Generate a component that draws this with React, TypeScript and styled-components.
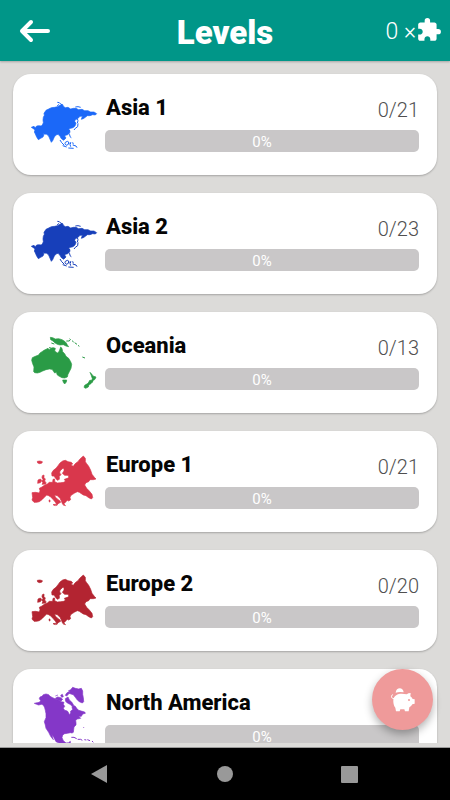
import React from "react";
import styled, { createGlobalStyle } from "styled-components";
import { MdExtension } from "react-icons/md";

const GlobalStyle = createGlobalStyle`
  *, *::before, *::after { box-sizing: border-box; }
  body { margin: 0; background: #dcdbd9; font-family: Roboto, sans-serif; }
  button { border: 0; padding: 0; background: none; font: inherit; color: inherit; cursor: pointer; }
`;

const Screen = styled.div`
  display: flex;
  flex-direction: column;
  height: 100vh;
  background: #dcdbd9;
`;

const Header = styled.header`
  flex: none;
  display: grid;
  grid-template-columns: 1fr auto 1fr;
  align-items: center;
  height: 61px;
  padding: 0 8px;
  background: #009688;
  color: #fff;
  box-shadow: 0 1px 2px rgba(0, 0, 0, 0.25);
`;

const BackButton = styled.button`
  display: flex;
  width: 34px;
  height: 34px;
  margin-left: 10px;
`;

const Title = styled.h1`
  margin: 0;
  padding-top: 4px;
  font-size: 33px;
  line-height: 40px;
  font-weight: 900;
`;

const Pieces = styled.div`
  display: flex;
  justify-content: flex-end;
  align-items: center;
  padding-top: 2px;
  font-size: 23px;
  line-height: 28px;
  font-weight: 350;

  svg { margin-bottom: 3px; }
`;

const Levels = styled.main`
  flex: 1;
  min-height: 0;
  overflow: hidden;
  display: flex;
  flex-direction: column;
  gap: 18px;
  padding: 13px 13px 0;
  margin-bottom: 4px;
`;

const Card = styled.section`
  flex: none;
  display: flex;
  gap: 7px;
  height: 101px;
  padding: 16px 18px 0 15px;
  border-radius: 18px;
  background: #fff;
  box-shadow: 0 1px 2px rgba(0, 0, 0, 0.25);
`;

const MapPicture = styled.svg<{ $color: string }>`
  flex: none;
  width: 70px;
  height: 70px;
  fill: ${(p) => p.$color};
  stroke: ${(p) => p.$color};
  stroke-width: 2;
  stroke-linejoin: round;
`;

const Details = styled.div`
  flex: 1;
  min-width: 0;
`;

const Caption = styled.div`
  display: flex;
  justify-content: space-between;
  height: 40px;
`;

const Name = styled.h2`
  margin: 0;
  padding: 4px 0 0 1px;
  font-size: 22px;
  line-height: 28px;
  font-weight: 800;
  color: #050505;
`;

const Count = styled.span`
  padding-top: 6px;
  font-size: 20px;
  line-height: 28px;
  font-weight: 300;
  color: #505050;
`;

const Bar = styled.div`
  height: 22px;
  border-radius: 5px;
  background: #c9c7c8;
  color: #fff;
  font-size: 15px;
  line-height: 24px;
  text-align: center;
`;

const SavingsButton = styled.button`
  position: fixed;
  right: 17px;
  bottom: 70px;
  display: flex;
  align-items: center;
  justify-content: center;
  width: 61px;
  height: 61px;
  border-radius: 50%;
  && { background: #ef9a9a; color: #fff; }
  box-shadow: 0 4px 8px rgba(0, 0, 0, 0.3);
`;

const SystemBar = styled.nav`
  flex: none;
  display: grid;
  grid-template-columns: repeat(3, 1fr);
  height: 53px;
  padding: 0 38px;
  border-top: 1px solid #999;
  background: #000;
`;

const SystemButton = styled.button`
  display: flex;
  align-items: center;
  justify-content: center;
  svg { fill: #999; }
`;

const asia = (
  <>
    <path d="M34 112L42 109 46 113 50 108 56 107 64 108 68 103 70 98 69 90 70 82 73 76 72 70 78 61 86 57 94 53 104 52 112 50 120 46 126 43 130 49 136 53 144 52 152 57 160 55 168 55 176 59 186 58 194 62 204 62 212 66 222 66 230 71 226 75 218 74 210 77 202 77 196 82 190 86 184 88 186 82 188 79 180 79 176 83 171 87 166 89 164 94 168 100 165 108 159 113 152 115 146 117 150 123 149 129 143 134 137 136 134 138 138 144 131 151 124 146 120 139 114 133 108 135 103 141 98 152 94 157 90 148 86 138 80 133 73 132 69 130 72 134 69 141 62 145 55 149 50 141 46 132 43 126 45 120 40 116z" />
    <path d="M112 37l6 1 4 4 8 4M116 43l-4 5M166 51l8-1 8 2M172 86l2 6-2 7M174 100l-1 10-7 5-4 5M147 120l2 3M146 130l3 4 1 6 4 3M120 150l5 8 8 8M128 167l12 4M136 157l6-3 4 2-1 7-6 3-4-5zM148 160l5-2-3 5 2 7M158 157l2 6M158 165l10 3 3 5M145 174l16 1" fill="none" strokeWidth="3" />
  </>
);

const oceania = (
  <>
    <path d="M35 106L37 98 46 94 56 90 60 84 66 80 72 76 80 72 84 70 88 74 94 69 100 68 106 70 104 78 112 84 117 80 120 72 122 66 126 70 128 80 134 86 138 94 146 100 152 110 155 118 153 130 148 140 144 148 142 156 134 159 126 158 118 154 112 150 109 142 104 144 100 138 96 133 88 132 78 134 68 138 60 142 52 144 44 143 41 140 42 126 38 116z" />
    <path d="M128 165L140 165 139 171 134 177 130 172zM91 37L98 38 106 42 116 41 126 44 134 49 139 54 142 60 146 65 138 63 130 59 120 60 112 58 104 53 99 48 92 44zM210 142L215 147 219 153 228 156 225 163 220 166 216 173 214 168 217 161 214 152zM210 165L217 169 213 176 207 179 205 186 197 190 192 187 194 181 204 175z" />
    <path d="M94 54l9 3M139 48l9 0 2-4M149 41l3 3M156 47l5 4M164 53l7 5M174 61l4 3M187 96l8 3M87 68l6 1" fill="none" strokeWidth="3" />
  </>
);

const europe = (
  <>
    <path d="M36 165L38 158 37 150 36 143 46 142 58 144 60 137 58 130 66 126 74 120 82 117 88 112 98 112 99 103 104 102 104 110 112 114 122 113 132 112 136 108 133 103 142 100 147 97 144 91 134 91 127 85 132 78 132 70 127 71 120 78 119 84 123 89 118 94 118 103 112 106 106 99 102 93 96 93 95 84 100 76 108 70 114 62 120 54 128 48 136 46 144 50 154 52 158 57 152 60 160 64 164 58 168 54 174 50 178 44 184 38 190 33 196 40 196 50 200 56 206 64 212 76 216 88 224 98 228 102 220 104 210 104 206 110 198 113 194 120 200 130 208 138 216 148 218 158 214 162 206 158 198 152 190 150 184 146 178 142 172 140 164 144 158 148 152 152 150 158 152 164 146 168 142 166 138 170 132 176 134 180 128 178 124 168 120 160 112 152 104 150 106 156 112 162 120 168 122 172 114 176 110 182 108 174 100 164 92 156 86 152 80 150 74 156 66 164 58 170 50 172 42 172z" />
    <path d="M52 49l8-1 7 2-1 4-7 2-6-2zM67 92l5-2 0 8 4 4-2 6 4 5-1 4-11 1 3-5-4-4 4-5-3-6zM54 105l7-3 4 4-4 7-8 2zM87 165l3 0 0 6-2 0zM99 179l8-1-1 4zM130 181l8 1" />
  </>
);

const northAmerica = (
  <>
    <path d="M43 85L52 83 58 82 62 77 58 71 60 66 66 64 70 59 78 57 86 59 90 64 98 68 106 72 116 76 124 80 132 82 130 88 134 94 130 100 134 106 142 108 146 114 148 120 152 114 152 108 158 104 156 96 158 90 166 94 170 100 176 106 194 111 196 115 188 117 184 124 176 124 182 130 172 132 167 136 168 144 168 150 162 156 161 164 160 172 156 174 151 173 142 175 134 176 128 180 126 188 130 197 138 204 146 203 151 199 151 206 156 214 150 216 136 210 120 205 108 200 102 188 95 178 100 194 92 184 86 172 78 160 76 150 73 140 78 128 78 116 76 106 74 98 70 90 64 88 56 90 50 88z" />
    <path d="M145 48L152 44 158 37 166 40 176 42 184 40 188 48 188 58 190 68 191 80 187 84 178 80 172 75 166 67 160 59 153 57 144 54 150 51z" />
    <path d="M106 70l7-4 9 2 6 5-5 5-9-2zM122 61l5-3 3 7-5 2zM136 61l5-8 6-1-2 6-5 5zM136 71l8-5 4 9 7 6 5 8-4 4-6-5-8-4-5-5zM190 156l2 3M106 63l8-3" />
    <path d="M154 187l8 0 8 4M173 193l9 0 5 3M193 194l6 1M202 194l8 3M216 198l4 4" fill="none" strokeWidth="3" />
  </>
);

const levels = [
  { name: "Asia 1", total: 21, color: "#1b68f8", viewBox: "24 0 210 210", shape: asia },
  { name: "Asia 2", total: 23, color: "#173fba", viewBox: "24 0 210 210", shape: asia },
  { name: "Oceania", total: 13, color: "#2a9b46", viewBox: "24 9 210 210", shape: oceania },
  { name: "Europe 1", total: 21, color: "#d9374c", viewBox: "24 6 210 210", shape: europe },
  { name: "Europe 2", total: 20, color: "#b32431", viewBox: "24 6 210 210", shape: europe },
  { name: "North America", total: 22, color: "#8437c8", viewBox: "24 30 210 210", shape: northAmerica },
];

export default function App() {
  return (
    <Screen>
      <GlobalStyle />
      <Header>
        <BackButton aria-label="Back">
          <svg width="34" height="34" viewBox="0 0 34 34" fill="none" stroke="#fff" strokeWidth="4" strokeLinecap="round" strokeLinejoin="round">
            <path d="M30 17H4M13 8L4 17l9 9" />
          </svg>
        </BackButton>
        <Title>Levels</Title>
        <Pieces>
          0 ×<MdExtension size={26} />
        </Pieces>
      </Header>
      <Levels>
        {levels.map((level) => (
          <Card key={level.name}>
            <MapPicture $color={level.color} viewBox={level.viewBox} aria-hidden="true">
              {level.shape}
            </MapPicture>
            <Details>
              <Caption>
                <Name>{level.name}</Name>
                <Count>0/{level.total}</Count>
              </Caption>
              <Bar role="progressbar" aria-label={level.name} aria-valuenow={0}>0%</Bar>
            </Details>
          </Card>
        ))}
      </Levels>
      <SavingsButton aria-label="Savings">
        <svg width="26" height="26" viewBox="87 78 78 78" fill="#fff">
          <path d="M104 95C105 79 126 77 128 94Q115 91 104 95z" />
          <path d="M97 116C99 103 110 98 122 98L137 100Q142 96 149 96L148 106Q153 110 155 114L161 115V128L154 130Q151 136 145 139L143 151H132L130 145H118L116 151H105L103 140Q96 132 97 116z" />
          <path d="M98 113C90 113 89 103 95 101" fill="none" stroke="#fff" strokeWidth="3" strokeLinecap="round" />
          <circle cx="144" cy="117" r="3" fill="#ef9a9a" />
        </svg>
      </SavingsButton>
      <SystemBar>
        <SystemButton aria-label="System back">
          <svg width="18" height="18" viewBox="0 0 18 18"><path d="M0 9L16 0v18z" /></svg>
        </SystemButton>
        <SystemButton aria-label="Home">
          <svg width="16" height="16" viewBox="0 0 16 16"><circle cx="8" cy="8" r="8" /></svg>
        </SystemButton>
        <SystemButton aria-label="Recent apps">
          <svg width="17" height="17" viewBox="0 0 17 17"><rect width="17" height="17" rx="1" /></svg>
        </SystemButton>
      </SystemBar>
    </Screen>
  );
}
